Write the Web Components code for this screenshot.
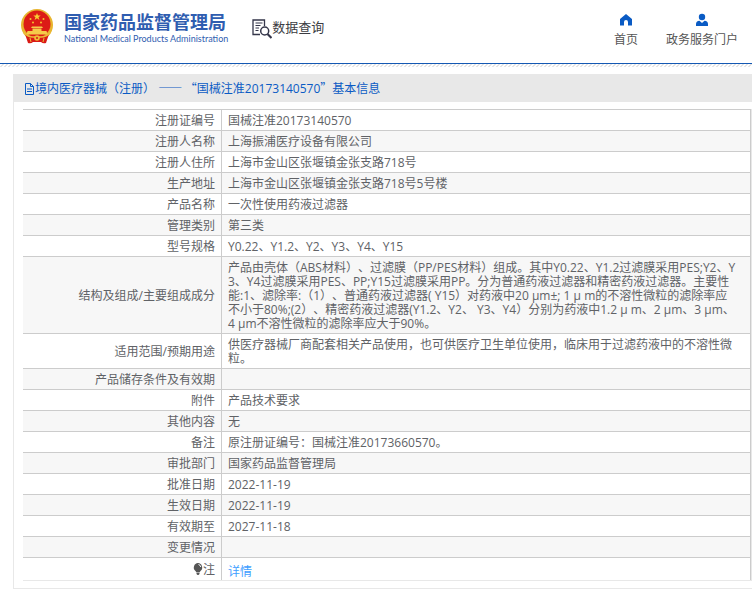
<!DOCTYPE html>
<html lang="zh-CN">
<head>
<meta charset="utf-8">
<meta name="viewport" content="width=device-width, initial-scale=1">
<title>数据查询 - 国家药品监督管理局</title>
<style>
html, body { margin: 0; background: #fff; }
body { font: 12px/14px "Open Sans", "Noto Sans CJK SC", sans-serif; color: #606266; text-spacing-trim: space-all; }
.wide { font-family: "Noto Sans CJK SC", sans-serif; }
</style>
</head>
<body>
<page-header>
  <brand-logo slot="brand">国家药品监督管理局<span slot="english">National Medical Products Administration</span></brand-logo>
  <query-title slot="title">数据查询</query-title>
  <nav-item slot="nav" icon="home">首页</nav-item>
  <nav-item slot="nav" icon="user">政务服务门户</nav-item>
</page-header>
<info-panel>
  <span slot="title">境内医疗器械（注册） <span class="wide">—— “</span>国械注准20173140570<span class="wide">”</span>基本信息</span>
  <detail-table></detail-table>
</info-panel>
<script>
const define = (name, html, setup) => {
  const template = document.createElement('template');
  template.innerHTML = html;
  customElements.define(name, class extends HTMLElement {
    constructor() {
      super();
      this.attachShadow({ mode: 'open' }).append(template.content.cloneNode(true));
    }
    connectedCallback() { if (setup) setup(this, this.shadowRoot); }
  });
};

define('page-header', `
<style>
:host { display: block; }
header { display: flex; align-items: flex-start; height: 63px; box-sizing: border-box; padding: 8px 14px 0 20px; }
nav { display: flex; gap: 28px; margin-left: auto; padding-top: 5px; }
.query { margin-left: 24px; padding-top: 9px; }
.line { height: 1px; background: #1459b3; }
.hatch { height: 3px; background: linear-gradient(135deg, transparent 38%, #e6e6e6 38% 62%, transparent 62%) 0 0 / 4px 3px; }
</style>
<header><slot name="brand"></slot><div class="query"><slot name="title"></slot></div><nav><slot name="nav"></slot></nav></header>
<div class="line"></div><div class="hatch"></div>`);

define('brand-logo', `
<style>
:host { display: flex; gap: 10px; color: #2f5db0; }
svg { display: block; width: 34px; height: 36px; }
.cn { font: bold 18px/26px "Noto Sans CJK SC", sans-serif; white-space: nowrap; }
.en { font: 9px/10px Lato, sans-serif; white-space: nowrap; }
</style>
<svg viewBox="0 0 34 36" aria-hidden="true">
  <circle cx="17" cy="17" r="16" fill="#e8b52f"/>
  <circle cx="17" cy="16" r="13.500" fill="#dc1b16"/>
  <path d="M5 26q12 5 24 0l-3 9q-3 1-5-1h-8q-2 2-5 1z" fill="#d91a16"/>
  <path d="M17 5l1 2.600h2.700l-2.200 1.600.9 2.700-2.400-1.600-2.400 1.600.9-2.700-2.200-1.600H16z" fill="#f8ce34"/>
  <g fill="#f4c32e"><circle cx="10.500" cy="11" r="1"/><circle cx="13" cy="14.500" r="1"/><circle cx="21" cy="14.500" r="1"/><circle cx="23.500" cy="11" r="1"/></g>
  <path d="M12 18.500h10l1 1.500H11zM12.500 20.500h9v2.500h5l1 3.500h-21l1-3.500h5z" fill="#f5cb4a"/>
  <path d="M3.500 24q4 5 9.500 5h8q5.500 0 9.500-5" fill="none" stroke="#edbb38" stroke-width="1.600"/>
  <circle cx="17" cy="30" r="2.800" fill="#efbd37"/><circle cx="17" cy="30" r="1" fill="#d91a16"/>
  <path d="M10 30l1 4M24 30l-1 4" stroke="#efbd37"/>
</svg>
<div><div class="cn"><slot></slot></div><div class="en"><slot name="english"></slot></div></div>`);

define('query-title', `
<style>
:host { display: flex; align-items: flex-start; color: #3b3c42; font: 13px/20px "Noto Sans CJK SC", sans-serif; white-space: nowrap; }
svg { width: 20px; height: 20px; margin-top: 2px; }
</style>
<svg viewBox="0 0 20 20" fill="none" stroke="#34364a" aria-hidden="true">
  <path d="M8 15.500H1V1h11.500V7" stroke-width="1.300"/>
  <path d="M3.500 4h7M3.500 6.500h5M3.500 9h3.500M3.500 11.500h3" stroke-width="1"/>
  <circle cx="12.700" cy="12" r="4" stroke-width="1.500"/><path d="M15.500 15l4 4" stroke-width="2.200"/>
</svg><slot></slot>`);

const icons = {
  home: '<path d="M7 1l6 5v6.500H9V9a2 2 0 0 0-4 0v3.500H1V6z"/>',
  user: '<circle cx="7" cy="4" r="3.200"/><path d="M1 13v-2q0-3 3.500-3.300L7 10l2.500-2.300Q13 8 13 11v2z"/>'
};
define('nav-item', `
<style>
:host { display: block; }
a { display: flex; flex-direction: column; align-items: center; gap: 3px; color: #555; text-decoration: none; font: 12px/18px "Noto Sans CJK SC", sans-serif; }
svg { width: 14px; height: 14px; fill: #0a5bc4; }
</style>
<a href="#"><svg viewBox="0 0 14 14" aria-hidden="true"></svg><slot></slot></a>`,
(host, root) => { root.querySelector('svg').innerHTML = icons[host.getAttribute('icon')]; });

define('info-panel', `
<style>
:host { display: block; margin: 7px 0 9px 13px; border: 1px solid #e8e8e8; border-right: 0; }
h1 { display: flex; align-items: center; margin: 0; padding: 0 10px; height: 27px; background: #e8e8e8; color: #0a5bc4; font: inherit; }
svg { width: 11px; height: 12px; }
.body { padding: 7px 0 7px 9px; }
</style>
<h1><svg viewBox="0 0 11 12" fill="none" stroke="#0a5bc4" aria-hidden="true"><path d="M1.500.5h5l3 3v8h-8zM6.500.5v3h3M3 6h5M3 8.500h5"/></svg><slot name="title"></slot></h1>
<div class="body"><slot></slot></div>`);

const rows = [
  ['注册证编号', '国械注准20173140570'],
  ['注册人名称', '上海振浦医疗设备有限公司'],
  ['注册人住所', '上海市金山区张堰镇金张支路718号'],
  ['生产地址', '上海市金山区张堰镇金张支路718号5号楼'],
  ['产品名称', '一次性使用药液过滤器'],
  ['管理类别', '第三类'],
  ['型号规格', 'Y0.22、Y1.2、Y2、Y3、Y4、Y15'],
  ['结构及组成/主要组成成分', '产品由壳体（ABS材料）、过滤膜（PP/PES材料）组成。其中Y0.22、Y1.2过滤膜采用PES;Y2、Y<br>3、Y4过滤膜采用PES、PP;Y15过滤膜采用PP。分为普通药液过滤器和精密药液过滤器。主要性<br>能:1、滤除率:（1）、普通药液过滤器( Y15）对药液中20 μm±; 1 μ m的不溶性微粒的滤除率应<br>不小于80%;(2）、精密药液过滤器(Y1.2、Y2、 Y3、Y4）分别为药液中1.2 μ m、2 μm、3 μm、<br>4 μm不溶性微粒的滤除率应大于90%。'],
  ['适用范围/预期用途', '供医疗器械厂商配套相关产品使用，也可供医疗卫生单位使用，临床用于过滤药液中的不溶性微<br>粒。'],
  ['产品储存条件及有效期', ''],
  ['附件', '产品技术要求'],
  ['其他内容', '无'],
  ['备注', '原注册证编号：国械注准20173660570。'],
  ['审批部门', '国家药品监督管理局'],
  ['批准日期', '2022-11-19'],
  ['生效日期', '2022-11-19'],
  ['有效期至', '2027-11-18'],
  ['变更情况', ''],
  ['<svg viewBox="0 0 10 12" aria-hidden="true"><path d="M5 0a4.500 4.500 0 0 1 2.500 8L6.500 9.500h-3L2.500 8A4.500 4.500 0 0 1 5 0zM3.500 10h3v1l-1 1h-1l-1-1z" fill="#555"/><path d="M5.500 1.500q2 .5 2.300 2.500" fill="none" stroke="#fff"/></svg>注', '<a href="#">详情</a>']
];
define('detail-table', `
<style>
:host { display: block; }
table { width: 100%; border-collapse: separate; border-spacing: 0; border-right: 1px solid #e8e8e8; border-bottom: 1px solid #e8e8e8; }
th, td { padding: 4px 6px 2px; height: 14px; border-top: 1px solid #ccc; font: inherit; vertical-align: middle; }
th { width: 186px; text-align: right; border-right: 1px solid #ccc; }
td { text-align: left; border-right: 1px solid #ccc; }
tr:nth-child(even) { background: #f7f7f7; }
tr:last-child th { padding: 5px 6px 3px; }
tr:last-child td { padding: 7px 6px 1px; }
a { color: #409eff; text-decoration: none; }
svg { width: 10px; height: 12px; vertical-align: -1px; }
</style>
<table><tbody></tbody></table>`,
(host, root) => {
  root.querySelector('tbody').innerHTML = rows.map(([k, v]) => `<tr><th scope="row">${k}</th><td>${v}</td></tr>`).join('');
});
</script>
</body>
</html>
